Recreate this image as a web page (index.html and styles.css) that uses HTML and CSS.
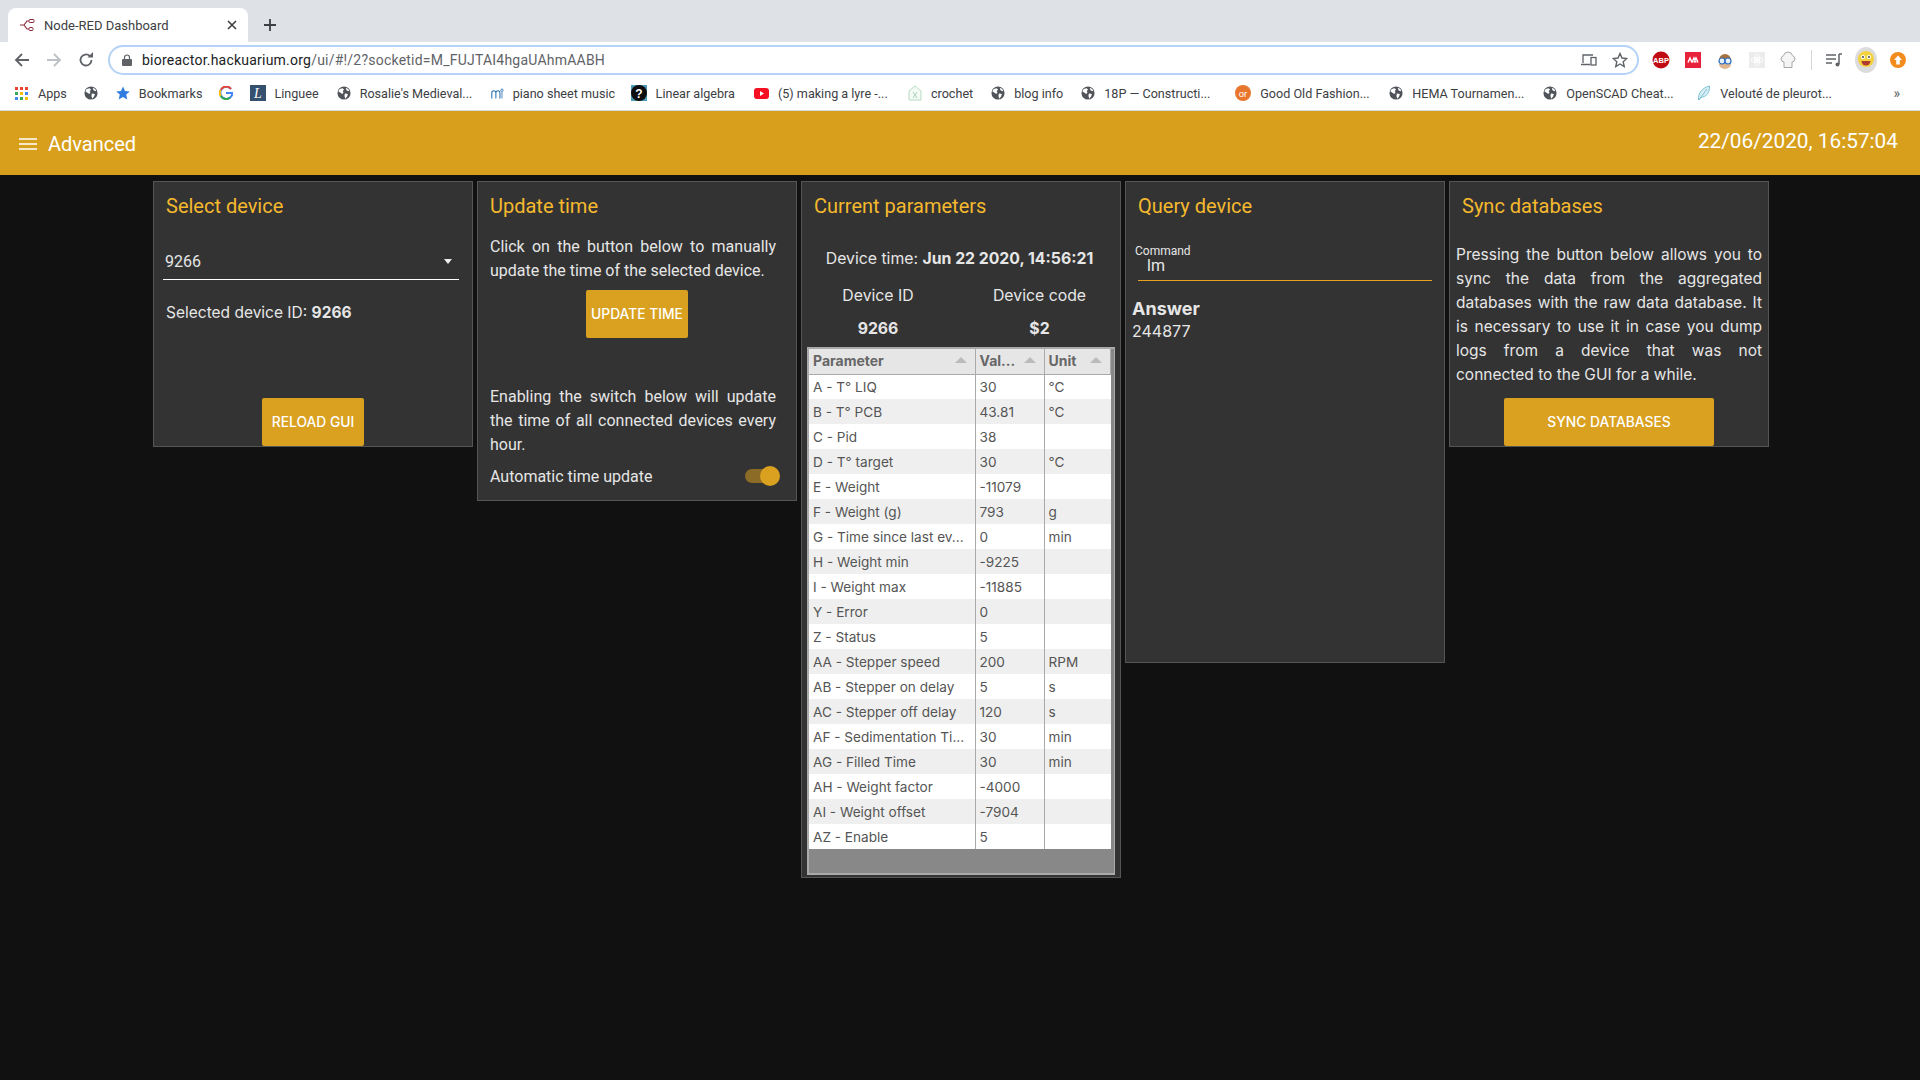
FILE: index.html
```html
<!DOCTYPE html>
<html lang="en">
<head>
    <meta charset="UTF-8">
    <title>Node-RED Dashboard</title>
    <link rel="stylesheet" href="styles.css">
</head>
<body>
    <svg class="defs" width="0" height="0">
        <symbol id="globe" viewBox="0 0 16 16">
            <circle cx="8" cy="8" r="7.5" fill="#50545a"/>
            <path d="M3 3.5 6.5 2.5 8 4 6.5 6 7.5 7 6 9 3.5 7.5 1.5 6ZM9 8.500 12.500 9 11.500 12 9.500 14.500 8.500 11.500ZM10 2 13 3.500 14 6 11.500 5.500 10.500 4Z" fill="#fff"/>
        </symbol>
    </svg>

    <div class="tab-strip">
        <div class="tab">
            <svg class="tab-icon" viewBox="0 0 16 16" width="16" height="16"><path d="M1 8h4l3-4h2M5 8l3 4h2" fill="none" stroke="#8f2d3c" stroke-width="1.200"/><rect x="10" y="2.500" width="5" height="3" rx="1" fill="none" stroke="#8f2d3c"/><rect x="10" y="10.500" width="4" height="3" rx="1" fill="none" stroke="#8f2d3c"/></svg>
            <span class="tab-title">Node-RED Dashboard</span>
            <svg class="tab-close" viewBox="0 0 10 10" width="10" height="10"><path d="M1 1 9 9M9 1 1 9" stroke="#3c4043" stroke-width="1.600"/></svg>
        </div>
        <svg class="new-tab" viewBox="0 0 12 12" width="12" height="12"><path d="M6 0v12M0 6h12" stroke="#3c4043" stroke-width="1.800"/></svg>
    </div>

    <div class="toolbar">
        <svg class="nav-icon" viewBox="0 0 16 16" width="16" height="16"><path d="M15 8H2M8 2 2 8l6 6" fill="none" stroke="#5f6368" stroke-width="1.800"/></svg>
        <svg class="nav-icon" viewBox="0 0 16 16" width="16" height="16"><path d="M1 8h13M8 2l6 6-6 6" fill="none" stroke="#bdc1c6" stroke-width="1.800"/></svg>
        <svg class="nav-icon" viewBox="0 0 16 16" width="16" height="16"><path d="M13.500 8A5.500 5.500 0 1 1 11.800 4" fill="none" stroke="#5f6368" stroke-width="1.800"/><path d="M9.500 5.500H15V0Z" fill="#5f6368"/></svg>
        <div class="url-bar">
            <svg class="lock" viewBox="0 0 10 12" width="10" height="12"><rect y="5" width="10" height="7" rx="1" fill="#5f6368"/><path d="M2.500 5V3.500a2.500 2.500 0 0 1 5 0V5" fill="none" stroke="#5f6368" stroke-width="1.200"/></svg>
            <span class="url"><b>bioreactor.hackuarium.org</b>/ui/#!/2?socketid=M_FUJTAI4hgaUAhmAABH</span>
            <svg class="url-action" viewBox="0 0 16 14" width="16" height="14"><path d="M2 10V2h10M0 11.500h9" fill="none" stroke="#5f6368" stroke-width="1.300"/><rect x="10" y="4.500" width="5" height="7.500" fill="none" stroke="#5f6368" stroke-width="1.300"/></svg>
            <svg class="url-action" viewBox="0 0 16 16" width="16" height="16"><path d="M8 1.500 10 6l4.800.5-3.600 3.200 1 4.800L8 12l-4.200 2.500 1-4.800L1.200 6.500 6 6Z" fill="none" stroke="#5f6368" stroke-width="1.400"/></svg>
        </div>
        <div class="extensions">
            <svg viewBox="0 0 18 18" width="18" height="18"><circle cx="9" cy="9" r="8.500" fill="#c00b12"/><text class="icon-text icon-abp" x="9" y="12">ABP</text></svg>
            <svg viewBox="0 0 16 16" width="16" height="16"><rect width="16" height="16" fill="#e7223a"/><path d="M3 10.500 5 6l2 4.500M7 10.500 9 6l2 4.500M9 10.500 11 6l2 4.500" fill="none" stroke="#fff" stroke-width="1.500"/></svg>
            <svg viewBox="0 0 18 18" width="18" height="18"><path d="M3 9a6 6 0 0 1 12 0v3H3Z" fill="#a5713c"/><path d="M3 13a6 5 0 0 0 12 0Z" fill="#e0b58d"/><circle cx="6" cy="10" r="3" fill="#e8f0f8" stroke="#2a6ec0" stroke-width="1.200"/><circle cx="12" cy="10" r="3" fill="#e8f0f8" stroke="#2a6ec0" stroke-width="1.200"/></svg>
            <svg viewBox="0 0 16 16" width="16" height="16"><rect width="16" height="16" fill="#ececec"/><circle cx="8" cy="8" r="2" fill="#fff"/><ellipse cx="8" cy="8" rx="6" ry="2.500" fill="none" stroke="#fff"/><ellipse cx="8" cy="8" rx="2.500" ry="6" fill="none" stroke="#fff"/></svg>
            <svg viewBox="0 0 16 18" width="16" height="18"><path d="M4 11a3.200 3.200 0 0 1-.5-6.300 4.600 4.600 0 0 1 9 0A3.200 3.200 0 0 1 12 11v5.500H4Z" fill="#f5f5f5" stroke="#a8a8a8"/></svg>
            <span class="toolbar-sep"></span>
            <svg class="ext-playlist" viewBox="0 0 18 16" width="18" height="16"><path d="M1 3h10M1 7h10M1 11h6" stroke="#5f6368" stroke-width="1.500"/><path d="M14 2v10" stroke="#5f6368" stroke-width="1.500"/><circle cx="12.500" cy="12.500" r="2" fill="#5f6368"/><path d="M14 2h3" stroke="#5f6368" stroke-width="1.500"/></svg>
            <svg class="ext-avatar" viewBox="0 0 22 26" width="22" height="26"><ellipse cx="11" cy="13" rx="11" ry="13" fill="#dcdcdc"/><circle cx="11" cy="12" r="8" fill="#f2d23e"/><circle cx="8" cy="10" r="2" fill="#fff"/><circle cx="14" cy="10" r="2" fill="#fff"/><circle cx="8" cy="10" r=".900" fill="#333"/><circle cx="14" cy="10" r=".900" fill="#333"/><path d="M6.500 14h9a4.500 4.500 0 0 1-9 0Z" fill="#b03a2e"/></svg>
            <svg class="ext-update" viewBox="0 0 16 16" width="16" height="16"><circle cx="8" cy="8" r="8" fill="#f28c1e"/><path d="M8 3.500 12 8H9.800v4.500H6.200V8H4Z" fill="#fff"/></svg>
        </div>
    </div>

    <div class="bookmarks">
        <span class="bookmark bookmark-apps">
            <svg viewBox="0 0 13 13" width="13" height="13"><rect width="3" height="3" fill="#ea4335"/><rect x="5" width="3" height="3" fill="#ea4335"/><rect x="10" width="3" height="3" fill="#ea4335"/><rect y="5" width="3" height="3" fill="#34a853"/><rect x="5" y="5" width="3" height="3" fill="#fbbc05"/><rect x="10" y="5" width="3" height="3" fill="#4285f4"/><rect y="10" width="3" height="3" fill="#4285f4"/><rect x="5" y="10" width="3" height="3" fill="#34a853"/><rect x="10" y="10" width="3" height="3" fill="#fbbc05"/></svg>
            Apps
        </span>
        <span class="bookmark"><svg width="14" height="14"><use href="#globe"/></svg></span>
        <span class="bookmark">
            <svg viewBox="0 0 14 14" width="14" height="14"><path d="M7 .5 9 5l4.800.4-3.600 3.200 1.100 4.800L7 10.900l-4.300 2.500 1.100-4.800L.2 5.400 5 5Z" fill="#2f7de1"/></svg>
            Bookmarks
        </span>
        <span class="bookmark bookmark-g">
            <svg viewBox="0 0 14 14" width="14" height="14"><path d="M12 3a6 6 0 1 0 1.400 4H7" fill="none" stroke="#4285f4" stroke-width="2"/><path d="M2 3.500A6 6 0 0 1 12 3" fill="none" stroke="#ea4335" stroke-width="2"/><path d="M1.700 10A6 6 0 0 0 11 11.500" fill="none" stroke="#34a853" stroke-width="2"/><path d="M1.500 4A6 6 0 0 0 1.700 10" fill="none" stroke="#fbbc05" stroke-width="2"/></svg>
        </span>
        <span class="bookmark">
            <svg viewBox="0 0 16 16" width="16" height="16"><rect width="16" height="16" fill="#35506e"/><text class="icon-text icon-linguee" x="8" y="13">L</text></svg>
            Linguee
        </span>
        <span class="bookmark bookmark-long"><svg width="14" height="14"><use href="#globe"/></svg>Rosalie's Medieval...</span>
        <span class="bookmark bookmark-piano">
            <svg viewBox="0 0 16 16" width="13" height="15"><path d="M1 14V7a2.500 2.500 0 0 1 5 0v7M6 7a2.500 2.500 0 0 1 5 0v7" fill="none" stroke="#2a6fb0" stroke-width="1.300"/><circle cx="13.500" cy="4" r="1.500" fill="none" stroke="#2a6fb0"/><path d="M13.500 6v8" stroke="#2a6fb0"/></svg>
            piano sheet music
        </span>
        <span class="bookmark bookmark-algebra">
            <svg viewBox="0 0 16 16" width="16" height="16"><rect width="16" height="16" fill="#4f9dbb"/><circle cx="8" cy="8" r="8" fill="#0d0d0d"/><text class="icon-text icon-question" x="8" y="12.500">?</text></svg>
            Linear algebra
        </span>
        <span class="bookmark bookmark-long">
            <svg viewBox="0 0 15 11" width="15" height="11"><rect width="15" height="11" rx="3" fill="#f40f22"/><path d="M6 3v5l4-2.500Z" fill="#fff"/></svg>
            (5) making a lyre -...
        </span>
        <span class="bookmark">
            <svg viewBox="0 0 14 16" width="14" height="16"><path d="M1 15V6l6-5 6 5v9Z" fill="#f4faf5" stroke="#b7dcc4"/><path d="M5 13l4-6M9 13 5 7" stroke="#a7d3b6"/></svg>
            crochet
        </span>
        <span class="bookmark"><svg width="14" height="14"><use href="#globe"/></svg>blog info</span>
        <span class="bookmark bookmark-long"><svg width="14" height="14"><use href="#globe"/></svg>18P — Constructi...</span>
        <span class="bookmark bookmark-long">
            <svg viewBox="0 0 16 16" width="16" height="16"><circle cx="8" cy="8" r="8" fill="#e8762c"/><text class="icon-text icon-or" x="8" y="11.500">or</text></svg>
            Good Old Fashion...
        </span>
        <span class="bookmark bookmark-long"><svg width="14" height="14"><use href="#globe"/></svg>HEMA Tournamen...</span>
        <span class="bookmark bookmark-long"><svg width="14" height="14"><use href="#globe"/></svg>OpenSCAD Cheat...</span>
        <span class="bookmark">
            <svg viewBox="0 0 14 16" width="14" height="16"><path d="M1.500 15C1 8 5 3 12.500 1 13 8 9 12 3.500 12.500Z" fill="#d8eef4" stroke="#7cc3d6"/><path d="M2 15 10 4" stroke="#7cc3d6"/></svg>
            Velouté de pleurot...
        </span>
        <span class="bookmark-more">»</span>
    </div>

    <header class="app-header">
        <div class="app-title">
            <svg viewBox="0 0 18 12" width="18" height="12"><path d="M0 1h18M0 6h18M0 11h18" stroke="#fff" stroke-width="1.700"/></svg>
            <span>Advanced</span>
        </div>
        <div class="app-clock">22/06/2020, 16:57:04</div>
    </header>

    <main class="dashboard">
        <section class="panel panel-select">
            <h2>Select device</h2>
            <div class="select-box">
                <span>9266</span>
                <span class="select-caret"></span>
            </div>
            <p class="selected-id">Selected device ID: <b>9266</b></p>
            <button class="btn btn-reload">RELOAD GUI</button>
        </section>

        <section class="panel panel-time">
            <h2>Update time</h2>
            <p class="text-block">Click on the button below to manually update the time of the selected device.</p>
            <button class="btn btn-update">UPDATE TIME</button>
            <p class="text-block text-switch">Enabling the switch below will update the time of all connected devices every hour.</p>
            <div class="switch-row">
                <span>Automatic time update</span>
                <span class="switch"><span class="switch-knob"></span></span>
            </div>
        </section>

        <section class="panel panel-params">
            <h2>Current parameters</h2>
            <p class="device-time">Device time: <b>Jun 22 2020, 14:56:21</b></p>
            <div class="device-info">
                <span>Device ID</span>
                <span>Device code</span>
                <b>9266</b>
                <b>$2</b>
            </div>
            <div class="table-wrap">
                <table class="params">
                    <colgroup><col class="col-name"><col class="col-value"><col class="col-unit"></colgroup>
                    <thead>
                        <tr><th>Parameter</th><th>Val...</th><th>Unit</th></tr>
                    </thead>
                    <tbody>
                        <tr><td>A - T° LIQ</td><td>30</td><td>°C</td></tr>
                        <tr><td>B - T° PCB</td><td>43.81</td><td>°C</td></tr>
                        <tr><td>C - Pid</td><td>38</td><td></td></tr>
                        <tr><td>D - T° target</td><td>30</td><td>°C</td></tr>
                        <tr><td>E - Weight</td><td>-11079</td><td></td></tr>
                        <tr><td>F - Weight (g)</td><td>793</td><td>g</td></tr>
                        <tr><td>G - Time since last ev...</td><td>0</td><td>min</td></tr>
                        <tr><td>H - Weight min</td><td>-9225</td><td></td></tr>
                        <tr><td>I - Weight max</td><td>-11885</td><td></td></tr>
                        <tr><td>Y - Error</td><td>0</td><td></td></tr>
                        <tr><td>Z - Status</td><td>5</td><td></td></tr>
                        <tr><td>AA - Stepper speed</td><td>200</td><td>RPM</td></tr>
                        <tr><td>AB - Stepper on delay</td><td>5</td><td>s</td></tr>
                        <tr><td>AC - Stepper off delay</td><td>120</td><td>s</td></tr>
                        <tr><td>AF - Sedimentation Ti...</td><td>30</td><td>min</td></tr>
                        <tr><td>AG - Filled Time</td><td>30</td><td>min</td></tr>
                        <tr><td>AH - Weight factor</td><td>-4000</td><td></td></tr>
                        <tr><td>AI - Weight offset</td><td>-7904</td><td></td></tr>
                        <tr><td>AZ - Enable</td><td>5</td><td></td></tr>
                    </tbody>
                </table>
            </div>
        </section>

        <section class="panel panel-query">
            <h2>Query device</h2>
            <div class="field">
                <label class="field-label">Command</label>
                <div class="field-value">lm</div>
            </div>
            <h3 class="answer-title">Answer</h3>
            <div class="answer-value">244877</div>
        </section>

        <section class="panel panel-sync">
            <h2>Sync databases</h2>
            <p class="text-block">Pressing the button below allows you to sync the data from the aggregated databases with the raw data database. It is necessary to use it in case you dump logs from a device that was not connected to the GUI for a while.</p>
            <button class="btn btn-sync">SYNC DATABASES</button>
        </section>
    </main>
</body>
</html>
```

FILE: styles.css
```css
* {
    box-sizing: border-box;
}
html, body {
    margin: 0;
    height: 100%;
}
body {
    background: #111;
    font-family: Roboto, sans-serif;
    color: #e6e6e6;
    overflow: hidden;
}
.defs {
    position: absolute;
}

/* browser chrome */
.tab-strip {
    height: 42px;
    background: #dee1e6;
    display: flex;
    align-items: flex-end;
    padding-left: 8px;
}
.tab {
    width: 240px;
    height: 34px;
    background: #fff;
    border-radius: 8px 8px 0 0;
    display: flex;
    align-items: center;
    padding: 0 11px;
}
.tab-icon {
    margin-right: 9px;
}
.tab-title {
    flex: 1;
    font-size: 13px;
    color: #3c4043;
}
.new-tab {
    margin: 0 0 11px 16px;
}
.toolbar {
    height: 36px;
    background: #fff;
    display: flex;
    align-items: center;
    padding-left: 14px;
}
.nav-icon {
    margin-right: 16px;
}
.url-bar {
    width: 1531px;
    height: 30px;
    margin-left: -2px;
    border: 2px solid #b5d3f6;
    border-radius: 15px;
    display: flex;
    align-items: center;
    padding: 0 9px 0 12px;
}
.lock {
    margin-right: 10px;
}
.url {
    flex: 1;
    font-size: 14px;
    letter-spacing: .22px;
    color: #5f6368;
}
.url b {
    font-weight: 400;
    color: #202124;
}
.url-action {
    margin-left: 15px;
}
.extensions {
    display: flex;
    align-items: center;
    gap: 15px;
    margin-left: 13px;
}
.toolbar-sep {
    width: 1px;
    height: 20px;
    background: #d5d7da;
}
.ext-playlist {
    margin-left: -2px;
}
.ext-avatar {
    margin-left: -3px;
}
.ext-update {
    margin-left: -2px;
}
.icon-text {
    fill: #fff;
    text-anchor: middle;
    font-family: "Liberation Sans", sans-serif;
    font-weight: 700;
}
.icon-abp {
    font-size: 7.500px;
}
.icon-linguee {
    font-family: "Liberation Serif", serif;
    font-style: italic;
    font-weight: 400;
    font-size: 14px;
}
.icon-question {
    font-size: 12px;
}
.icon-or {
    font-size: 9.500px;
    font-weight: 400;
}
.bookmarks {
    height: 33px;
    background: #fff;
    display: flex;
    align-items: center;
    gap: 18px;
    padding: 0 0 2px 15px;
    font-size: 12.600px;
    color: #3c4043;
    border-bottom: 1px solid #d5d7da;
    position: relative;
}
.bookmark {
    display: flex;
    align-items: center;
    gap: 9px;
    white-space: nowrap;
}
.bookmark-apps {
    gap: 10px;
    margin-right: -1px;
}
.bookmark-g {
    margin: 0 -1px 0 -2px;
}
.bookmark-long {
    width: 136px;
}
.bookmark-piano {
    margin-right: -2.500px;
}
.bookmark-algebra {
    margin-right: 1px;
}
.bookmark-more {
    position: absolute;
    right: 20px;
    color: #5f6368;
    font-size: 14px;
}

/* dashboard header */
.app-header {
    height: 64px;
    background: #d89f1d;
    color: #fff;
    display: flex;
    justify-content: space-between;
    align-items: center;
    padding: 1px 22px 0 19px;
}
.app-title {
    display: flex;
    align-items: center;
    gap: 11px;
    font-size: 20px;
}
.app-clock {
    font-size: 20.800px;
    margin-bottom: 6px;
}

/* panels */
.dashboard {
    display: flex;
    align-items: flex-start;
    gap: 4px;
    padding: 6px 0 0 153px;
}
.panel {
    width: 320px;
    flex: none;
    background: #333;
    border: 1px solid #555;
    display: flex;
    flex-direction: column;
    font-size: 16px;
    line-height: 24px;
}
.panel h2 {
    margin: 12px 0 0 12px;
    font-size: 20px;
    line-height: 24px;
    font-weight: 400;
    color: #f5b92e;
}
.panel-select {
    height: 266px;
}
.panel-time {
    height: 320px;
}
.panel-params {
    height: 697px;
}
.panel-query {
    height: 482px;
}
.panel-sync {
    height: 266px;
}
.text-block {
    margin: 0;
    text-align: justify;
}
.btn {
    display: block;
    height: 48px;
    border: none;
    border-radius: 2px;
    background: #d9a11f;
    color: #fff;
    font-family: Inter, sans-serif;
    font-size: 13.800px;
    font-weight: 500;
    padding: 0;
}

/* select device */
.select-box {
    margin: 26px 13px 0 9px;
    height: 36px;
    border-bottom: 1px solid #fff;
    display: flex;
    justify-content: space-between;
    align-items: center;
    padding: 0 7px 0 2px;
}
.select-caret {
    border: 4.500px solid transparent;
    border-top: 5px solid #eee;
    border-bottom: 0;
}
.selected-id {
    margin: 21px 0 0 12px;
    font-family: Inter, sans-serif;
    font-size: 15.500px;
}
.btn-reload {
    width: 102px;
    margin: auto auto 0;
}

/* update time */
.panel-time .text-block {
    margin: 17px 20px 0 12px;
}
.btn-update {
    width: 102px;
    margin: 7px 0 0 108px;
}
.panel-time .text-switch {
    margin-top: 47px;
}
.switch-row {
    display: flex;
    justify-content: space-between;
    align-items: center;
    margin: 8px 21px 0 12px;
}
.switch {
    position: relative;
    width: 30px;
    height: 14px;
    margin-bottom: 2px;
    border-radius: 7px;
    background: #8b6b25;
}
.switch-knob {
    position: absolute;
    right: -5px;
    top: -3px;
    width: 20px;
    height: 20px;
    border-radius: 50%;
    background: #d9a11f;
}

/* current parameters */
.device-time {
    margin: 29px 0 0;
    padding-right: 3px;
    text-align: center;
    font-family: Inter, sans-serif;
    font-size: 15.800px;
}
.device-info {
    display: grid;
    grid-template-columns: 152px 1fr;
    column-gap: 5px;
    text-align: center;
    row-gap: 9px;
    margin-top: 13px;
    font-family: Inter, sans-serif;
    font-size: 15.800px;
}
.table-wrap {
    margin: 6px 5px 2px 5px;
    flex: 1;
    background: #888;
    border: 2px solid #aaa;
    border-right-width: 1px;
    padding-right: 3px;
    font-family: Inter, sans-serif;
}
.params {
    border-collapse: collapse;
    table-layout: fixed;
    width: 100%;
    font-size: 13.600px;
    color: #555;
}
.col-name {
    width: 166px;
}
.col-value {
    width: 69px;
}
.params th {
    height: 25px;
    padding: 0 0 0 4px;
    background: #e6e6e6;
    color: #666;
    font-size: 14px;
    text-align: left;
    font-weight: 700;
    border-right: 1px solid #aaa;
    border-bottom: 1px solid #aaa;
    position: relative;
}
.params th::after {
    content: "";
    position: absolute;
    right: 8px;
    top: 8px;
    border: 6px solid transparent;
    border-top: 0;
    border-bottom: 6px solid #bbb;
}
.params td {
    height: 25px;
    padding: 0 0 0 4px;
    background: #fff;
    border-right: 1px solid #aaa;
    white-space: nowrap;
    overflow: hidden;
}
.params td:last-child {
    border-right: none;
}
.params tbody tr:nth-child(even) td {
    background: #efefef;
}

/* query device */
.field {
    margin: 22px 12px 0 12px;
    height: 41px;
    border-bottom: 1px solid #e6a11f;
}
.field-label {
    display: block;
    margin-left: -3px;
    font-size: 12px;
    line-height: 14px;
    padding-top: 4px;
}
.field-value {
    margin-left: 9px;
    line-height: 16px;
}
.answer-title {
    margin: 16px 0 0 6px;
    font-family: Inter, sans-serif;
    font-size: 18px;
    line-height: 24px;
    font-weight: 700;
}
.answer-value {
    margin-left: 6px;
    line-height: 20px;
    font-family: Inter, sans-serif;
}

/* sync databases */
.panel-sync .text-block {
    margin: 25px 6px 0 6px;
    flex: none;
    font-family: Inter, sans-serif;
    font-size: 15.500px;
}
.btn-sync {
    width: 210px;
    margin: auto auto 0;
}
```
